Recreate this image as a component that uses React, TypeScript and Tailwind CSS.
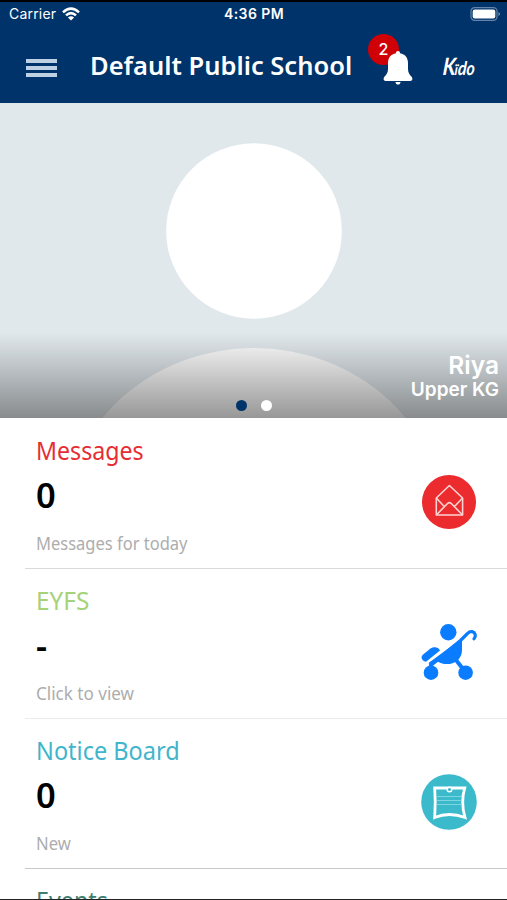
import React from 'react';

const StatusBar = () => (
  <div className="grid grid-cols-3 items-center h-[24px] pl-[9px] pr-[6px] text-white font-['Inter',sans-serif] text-[14px] leading-none">
    <div className="flex items-center gap-[6px]">
      <span className="tracking-[0.2px]">Carrier</span>
      <svg width="18" height="14" viewBox="0 0 18 14" fill="none" stroke="white" strokeWidth="2.5">
        <path d="M1 5.3 Q9 -2.1 17 5.3" />
        <path d="M4 8.4 Q9 3.8 14 8.4" />
        <path d="M9 13.6 L5.9 10.5 Q9 8.1 12.1 10.5 Z" fill="white" stroke="none" />
      </svg>
    </div>
    <span className="relative -left-px text-center font-semibold text-[14px] tracking-[0.4px]">4:36 PM</span>
    <div className="flex justify-end">
      <svg width="31" height="14" viewBox="0 0 31 14">
        <rect x="1" y=".7" width="26" height="12.6" rx="3.6" fill="none" stroke="#6583a8" strokeWidth="1.2" />
        <rect x="2.7" y="2.4" width="22.6" height="9.2" rx="2" fill="white" />
        <path d="M28.5 5 q3 2 0 4z" fill="#8099b7" />
      </svg>
    </div>
  </div>
);

const Header = () => (
  <header className="h-[103px] shrink-0 bg-[#00336a] border-t-2 border-black">
    <StatusBar />
    <div className="flex h-[77px] pl-[26px]">
      <div className="flex flex-col gap-[3px] w-[31px] mt-[33px]">
        <div className="h-[4px] bg-[#bdd0e4]" />
        <div className="h-[4px] bg-[#bdd0e4]" />
        <div className="h-[4px] bg-[#bdd0e4]" />
      </div>
      <h1 className="w-[262px] ml-[33px] mt-[23px] text-white whitespace-nowrap font-['Noto_Sans',sans-serif] font-semibold text-[25.6px] leading-[34px] origin-left scale-x-[0.997]">
        Default Public School
      </h1>
      <div className="relative w-[50px] ml-[15px]">
        <div className="absolute left-[1px] top-[8px] size-[31px] rounded-full bg-[#cf0006] text-white text-center font-['Inter',sans-serif] font-medium text-[16px] leading-[31px]">2</div>
        <svg className="absolute left-[16px] top-[25px]" width="30" height="34" viewBox="0 0 30 34" fill="white">
          <path d="M15 0 C16.4 0 17 .8 17 2.2 C22.2 3.2 25 6.6 25 12 V18 C25 22 27 24 28.6 25.8 C30 27.6 29.5 30 27.4 30 H2.6 C.5 30 0 27.6 1.4 25.8 C3 24 5 22 5 18 V12 C5 6.6 7.8 3.2 13 2.2 C13 .8 13.6 0 15 0Z" />
          <path d="M12.5 31 H17.5 C17.5 34.4 12.5 34.4 12.5 31Z" />
        </svg>
      </div>
      <div className="flex items-baseline ml-[26px] mt-[27px] h-[26px] text-white font-['Lato',sans-serif] italic font-bold origin-left scale-x-[0.84] -skew-x-6 whitespace-nowrap">
        <span className="text-[24px] leading-[26px]">K</span>
        <span className="text-[15px] -ml-px">ï</span>
        <span className="text-[19px]">do</span>
      </div>
    </div>
  </header>
);

const ProfileBanner = () => (
  <section className="relative h-[315px] shrink-0 overflow-hidden bg-[#e1e8ec]">
    <svg className="block" width="507" height="315" viewBox="0 0 507 315">
      <defs>
        <linearGradient id="shade" x1="0" y1="0" x2="0" y2="1">
          <stop offset="0" stopColor="#000" stopOpacity="0" />
          <stop offset="0.5" stopColor="#000" stopOpacity="0.2" />
          <stop offset="1" stopColor="#000" stopOpacity="0.4" />
        </linearGradient>
      </defs>
      <circle cx="254" cy="128" r="87.8" fill="white" />
      <ellipse cx="254" cy="421" rx="190" ry="176" fill="#fcfcfc" />
      <rect y="230" width="507" height="85" fill="url(#shade)" />
    </svg>
    <div className="absolute right-[8px] top-[248px] text-white text-right font-['Inter',sans-serif] font-semibold">
      <p className="text-[24.5px] leading-[28px]">Riya</p>
      <p className="text-[19px] leading-[22px]">Upper KG</p>
    </div>
    <div className="absolute left-[236px] top-[297px] flex gap-[14px]">
      <div className="size-[11px] rounded-full bg-[#00336a]" />
      <div className="size-[11px] rounded-full bg-white" />
    </div>
  </section>
);

const MessageIcon = () => (
  <svg width="56" height="56" viewBox="0 0 56 56">
    <circle cx="28" cy="28" r="27" fill="#eb2b2d" />
    <g fill="none" stroke="#ffd3d2" strokeWidth="1.6" strokeLinejoin="round">
      <path d="M15.3 24 L28.4 11.5 L41.6 24 V41 H15.3Z" />
      <path d="M15.3 24 L23.7 33 M41.6 24 L33 33 M15.3 41 L26.5 29.5 Q28.4 27.8 30.3 29.5 L41.6 41" />
    </g>
  </svg>
);

const StrollerIcon = () => (
  <svg className="overflow-visible" width="56" height="56" viewBox="0 1 56 56" fill="#0a7cff">
    <circle cx="27.3" cy="9.3" r="8.2" />
    <circle cx="10" cy="49.7" r="7.3" />
    <circle cx="44.6" cy="49.7" r="7.3" />
    <path d="M41 15.5 V27 C41 32 39 35 36 38 C31 42 22 42 17 38.7 L11 43.5 L7.5 40Z" />
    <path d="M9.5 49 V42 L39.5 17.5 L46.5 10.5 C49.5 7.3 53.2 8.5 54.2 11.5 Q54.8 13.8 53 15.8" fill="none" stroke="#0a7cff" strokeWidth="3.2" strokeLinecap="round" strokeLinejoin="round" />
    <path d="M35 37 L44 48.5" stroke="#0a7cff" strokeWidth="4" />
    <path d="M1.8 31.8 L9.5 25.6 C13 23 17.5 24 19 27.4 L5 38.8 C2 38.5 -1.3 34.8 1.8 31.8Z" />
  </svg>
);

const NoticeIcon = () => (
  <svg width="56" height="56" viewBox="0 0 56 56">
    <circle cx="28" cy="28" r="27.8" fill="#3bbacb" />
    <path d="M13.7 14 H43.7 Q39.5 28 44 43.5 Q28 37.5 13.7 43.5 Q14.8 28 13.7 14Z" fill="none" stroke="white" strokeWidth="2.8" />
    <path d="M16 22.5 H41 M16 26.5 H41 M16 30.5 H41" stroke="#8edce5" strokeWidth="0.8" />
    <circle cx="28.5" cy="15.5" r="2.3" fill="#3bbacb" stroke="white" strokeWidth="1.4" />
  </svg>
);

type RowProps = {
  title: string;
  titleClass: string;
  value: string;
  note: string;
  noteClass: string;
  lineClass: string;
  icon: React.ReactNode;
};

const Row = ({ title, titleClass, value, note, noteClass, lineClass, icon }: RowProps) => (
  <div className={`flex justify-between items-center h-[150px] shrink-0 ml-[25px] pl-[11px] pr-[30px] border-b ${lineClass}`}>
    <div className="h-full pt-[15px] whitespace-nowrap">
      <h2 className={`text-[24.5px] leading-[34px] origin-left ${titleClass}`}>{title}</h2>
      <p className="mt-[7px] text-[34.5px] leading-[40px] font-semibold text-black">{value}</p>
      <p className={`mt-[16px] text-[17.5px] leading-[24px] text-[#adadad] origin-left ${noteClass}`}>{note}</p>
    </div>
    <div className="mt-[17px]">{icon}</div>
  </div>
);

const App = () => {
  return (
    <div className="flex flex-col w-[507px] h-[900px] overflow-hidden bg-white border-b border-[#222] font-['Noto_Sans',sans-serif]">
      <Header />
      <ProfileBanner />
      <div className="pt-px">
        <Row title="Messages" titleClass="text-[#e52e34] scale-x-[0.945]" value="0" note="Messages for today" noteClass="scale-x-[0.943]" lineClass="border-[#dadada]" icon={<MessageIcon />} />
        <Row title="EYFS" titleClass="text-[#a6d279] scale-x-[0.995]" value="-" note="Click to view" noteClass="scale-x-[0.975]" lineClass="border-[#ececec]" icon={<StrollerIcon />} />
        <Row title="Notice Board" titleClass="text-[#41b5cc] scale-x-[0.96]" value="0" note="New" noteClass="scale-x-[0.95]" lineClass="border-[#c8c8c8]" icon={<NoticeIcon />} />
        <div className="ml-[36px] pt-[15px]">
          <h2 className="text-[24.5px] leading-[34px] text-[#417e72] origin-left scale-x-[0.95]">Events</h2>
        </div>
      </div>
    </div>
  );
};

export default App;
